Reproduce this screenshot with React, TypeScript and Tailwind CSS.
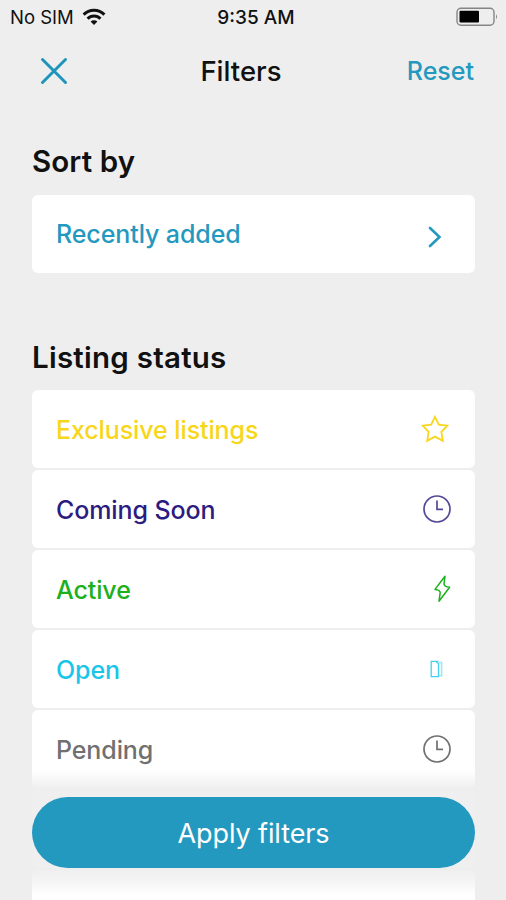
import type { ReactNode } from "react";

const ClockIcon = () => (
  <svg className="h-7 w-7" viewBox="0 0 28 28" fill="none" stroke="currentColor" strokeWidth="1.7">
    <circle cx="14" cy="14" r="13" />
    <path d="M14 5.5V14.3H20" />
  </svg>
);

const StarIcon = () => (
  <svg className="h-7 w-7" viewBox="0 0 28 28" fill="none" stroke="currentColor" strokeWidth="1.8">
    <path d="M14 1.8L17.8 9.6L26.4 10.7L20.4 16.8L21.8 25.8L14 21.6L6.2 25.8L7.6 16.8L1.6 10.7L10.2 9.6Z" />
  </svg>
);

const BoltIcon = () => (
  <svg className="h-7 w-[18px]" viewBox="0 0 18 28" fill="none" stroke="currentColor" strokeWidth="1.5" strokeLinejoin="round">
    <path d="M12 1.2L2 14.4Q7 15 7.2 17.5L6 26.2L16.6 12.2Q11.2 12 11 9Z" />
  </svg>
);

const DoorIcon = () => (
  <svg className="h-[18px] w-[13px]" viewBox="0 0 13 18" fill="none" stroke="currentColor" strokeWidth="1.3">
    <path d="M8.5 1.3H1.2V16.6H8.5V3.6L6 1.6" />
    <path d="M9 2.5H11.6V15.8H9" strokeWidth="1.6" opacity="0.5" />
  </svg>
);

type Status = {
  label: string;
  color: string;
  icon: ReactNode;
  iconBox: string;
};

const statuses: Status[] = [
  { label: "Exclusive listings", color: "text-[#f8d61c]", icon: <StarIcon />, iconBox: "mr-[26px]" },
  { label: "Coming Soon", color: "text-[#2c1b80]", icon: <ClockIcon />, iconBox: "mr-[24.5px] opacity-80" },
  { label: "Active", color: "text-[#1cb01c]", icon: <BoltIcon />, iconBox: "mr-[24px]" },
  { label: "Open", color: "text-[#18c6ea]", icon: <DoorIcon />, iconBox: "mr-[32px] opacity-80" },
  { label: "Pending", color: "text-[#707070]", icon: <ClockIcon />, iconBox: "mr-[24.5px]" },
];

export default function App() {
  return (
    <div className="relative flex h-[900px] w-[506px] flex-col overflow-hidden bg-[#eeeeee] font-['Inter',sans-serif] text-[#111111]">
      {/* Status bar */}
      <div className="grid h-[34px] shrink-0 grid-cols-3 items-center pr-2 pl-[10px] text-[18px] leading-none">
        <div className="flex items-center gap-2">
          <span className="pt-px text-[18.5px]">No SIM</span>
          <svg className="h-[18px] w-6" viewBox="0 0 24 18" fill="none" stroke="currentColor" strokeWidth="3">
            <path d="M1.6 6.6A14.7 14.7 0 0 1 22.4 6.6" />
            <path d="M5.6 10.7A9 9 0 0 1 18.4 10.7" />
            <path d="M12 17L8.6 13.6A4.8 4.8 0 0 1 15.4 13.6Z" fill="currentColor" stroke="none" />
          </svg>
        </div>
        <span className="pt-px pl-1 text-center text-[19px] font-medium">9:35 AM</span>
        <svg className="h-5 w-[42px] justify-self-end" viewBox="0 0 42 20" fill="none">
          <rect x="1" y="1.2" width="37" height="17" rx="4" stroke="#858585" strokeWidth="1.4" />
          <rect x="3.5" y="3.8" width="19.5" height="11.8" rx="1" fill="#000" />
          <path d="M40 7.2Q42 9.7 40 12.2Z" fill="#858585" />
        </svg>
      </div>

      {/* Header */}
      <header className="grid h-[74px] shrink-0 grid-cols-3 items-center px-8">
        <button aria-label="Close" className="ml-2 w-7 text-[#1f94bb]">
          <svg className="h-7 w-7" viewBox="0 0 28 28" stroke="currentColor" strokeWidth="3" strokeLinecap="round">
            <path d="M2.5 2.5L25.5 25.5M25.5 2.5L2.5 25.5" />
          </svg>
        </button>
        <h1 className="pt-0.5 pr-6 text-center text-[27.5px] font-[540]">Filters</h1>
        <button className="justify-self-end pt-0.5 text-[25px] font-[530] text-[#2499c0]">Reset</button>
      </header>

      <main className="shrink-0 px-8 pr-[31px]">
        <h2 className="mt-[34px] h-[53px] text-[29.5px] leading-[38px] font-[560] tracking-[0.1px]">Sort by</h2>
        <button className="flex h-[78px] w-full items-center justify-between rounded-md bg-white pr-[33.5px] pl-6 text-[25px] font-[530] text-[#2499c0]">
          <span className="pt-0.5 tracking-[-0.1px]">Recently added</span>
          <svg className="mt-[6px] h-[22px] w-[14px]" viewBox="0 0 14 22" fill="none" stroke="currentColor" strokeWidth="2.6" strokeLinecap="round">
            <path d="M2 2L11.5 11L2 20" />
          </svg>
        </button>

        <h2 className="mt-[65px] h-[52px] text-[29.5px] leading-[38px] font-[560] tracking-[0.25px]">Listing status</h2>
        <ul className="flex flex-col gap-0.5">
          {statuses.map(({ label, color, icon, iconBox }) => (
            <li key={label} className={`flex h-[78px] items-center justify-between rounded-md bg-white pl-6 text-[25px] font-[530] ${color}`}>
              <span className="pt-1 tracking-[-0.1px]">{label}</span>
              <span className={iconBox}>{icon}</span>
            </li>
          ))}
          <li className="h-[78px] rounded-md bg-white" />
          <li className="h-[78px] rounded-md bg-white" />
        </ul>
      </main>

      {/* Apply bar, floating over the list */}
      <div className="absolute inset-x-0 bottom-0 h-[130px] bg-[linear-gradient(to_bottom,#eeeeee00_0px,#eeeeee80_10px,#eeeeeeee_18px,#eeeeeeee_100px,#eeeeee80_114px,#eeeeee00_126px)] px-8 pt-[27px] pr-[31px]">
        <button className="h-[71px] w-full rounded-full bg-[#2499c0] pt-1 text-[27px] tracking-[-0.1px] text-white">Apply filters</button>
      </div>
    </div>
  );
}
